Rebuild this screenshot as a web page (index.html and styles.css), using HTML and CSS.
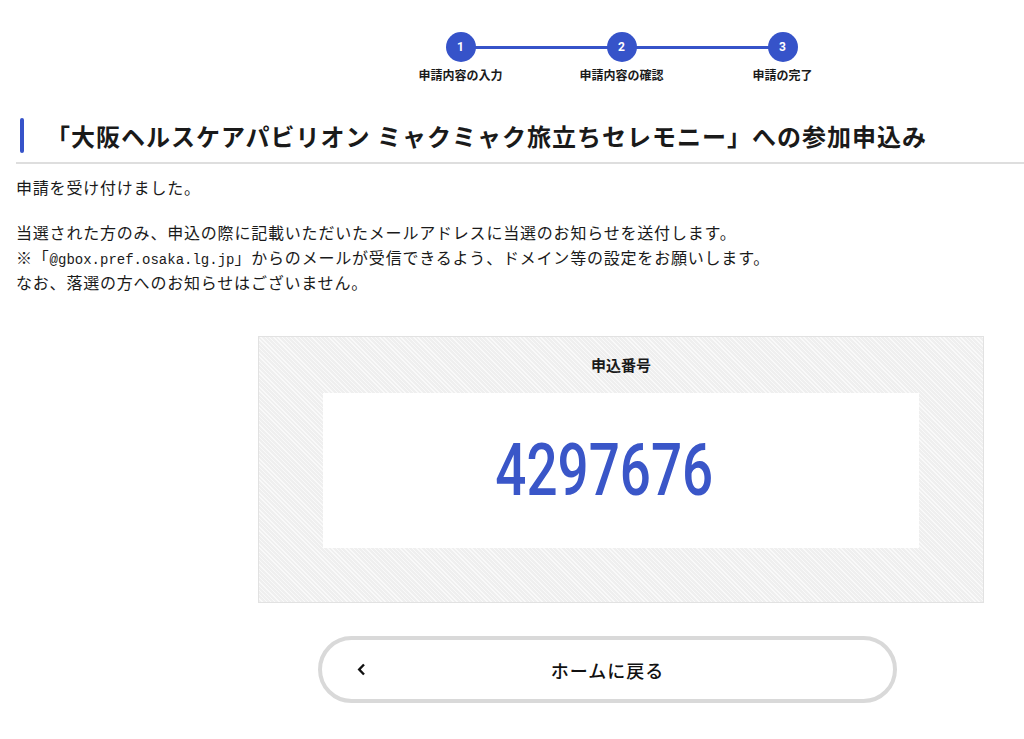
FILE: index.html
```html
<!doctype html>
<html lang="ja">
<head>
<meta charset="utf-8">
<title>申込完了</title>
<link rel="stylesheet" href="styles.css">
</head>

<body>
<div class="page">
	<ol class="steps">
		<li><span class="num">1</span><span class="label">申請内容の入力</span></li>
		<li><span class="num">2</span><span class="label">申請内容の確認</span></li>
		<li><span class="num">3</span><span class="label">申請の完了</span></li>
	</ol>

	<h1 class="title">「大阪ヘルスケアパビリオン ミャクミャク旅立ちセレモニー」への参加申込み</h1>

	<p class="lead">申請を受け付けました。</p>
	<p class="notice">当選された方のみ、申込の際に記載いただいたメールアドレスに当選のお知らせを送付します。<br>※「<span class="mono">@gbox.pref.osaka.lg.jp</span>」からのメールが受信できるよう、ドメイン等の設定をお願いします。<br>なお、落選の方へのお知らせはございません。</p>

	<div class="receipt">
		<p class="receipt-label">申込番号</p>
		<div class="receipt-number"><span>4297676</span></div>
	</div>

	<a class="btn-back" href="#">
		<svg class="chev" width="9" height="13" viewBox="0 0 9 13"><path d="M7 1.5 2.2 6.5 7 11.5" fill="none" stroke="#111" stroke-width="2.4"/></svg>
		<span class="btn-text">ホームに戻る</span>
	</a>
</div>
</body>
</html>
```

FILE: styles.css
```css
* {margin:0; padding:0; list-style:none; box-sizing:border-box;}
body {background:#fff; color:#1a1a1a; font-family:"Noto Sans CJK JP", "Noto Sans", sans-serif; overflow:hidden;}
.page {padding:32px 0 0 16px;}

/* steps */
.steps {display:flex; margin-left:364px;}
.steps li {width:161px; display:flex; flex-direction:column; align-items:center; position:relative;}
.steps li:not(:last-child)::after {content:""; position:absolute; left:50%; top:14px; width:100%; height:3px; background:#3653c9;}
.steps .num {width:30px; height:30px; border-radius:50%; background:#3653c9; color:#fff; font:700 12px/30px Roboto, sans-serif; text-align:center; position:relative; z-index:1;}
.steps .label {margin-top:6px; font-size:12px; line-height:14px; font-weight:700; white-space:nowrap;}

/* title */
.title {display:flex; align-items:center; margin-top:36px; padding-bottom:9px; border-bottom:2px solid #dedede; font-size:24px; line-height:35px; font-weight:700; letter-spacing:1px; white-space:nowrap;}
.title::before {content:""; flex:none; width:4px; height:35px; margin:0 22px 0 4px; border-radius:2px; background:#3653c9;}

.lead, .notice {font-size:16px; line-height:25px; letter-spacing:0.8px;}
.lead {margin-top:11px;}
.notice {margin-top:20px;}
.mono {font-family:"Liberation Mono", "DejaVu Sans Mono", monospace; font-size:14px; line-height:14px; letter-spacing:0;}

/* receipt */
.receipt {width:726px; height:267px; margin:41px 0 0 242px; border:1px solid #e2e2e2; padding:0 64px; background:repeating-linear-gradient(45deg, #efefef 0 2px, #f9f9f9 2px 3px);}
.receipt-label {height:56px; line-height:56px; text-align:center; font-size:15px; font-weight:700;}
.receipt-number {height:155px; background:#fff; display:flex; align-items:center; justify-content:center; padding-right:34px;}
.receipt-number span {display:inline-block; font:500 73px/1 Roboto, sans-serif; color:#3a56c8; transform:scaleX(0.75);}

/* button */
.btn-back {display:grid; grid-template-columns:1fr auto 1fr; align-items:center; width:579px; height:67px; margin:33px 0 0 302px; border:4px solid #d9d9d9; border-radius:34px; padding-left:35px; color:#111; text-decoration:none;}
.btn-back .chev {justify-self:start;}
.btn-text {font-size:18px; font-weight:500; letter-spacing:1px; margin-left:-35px;}
```
